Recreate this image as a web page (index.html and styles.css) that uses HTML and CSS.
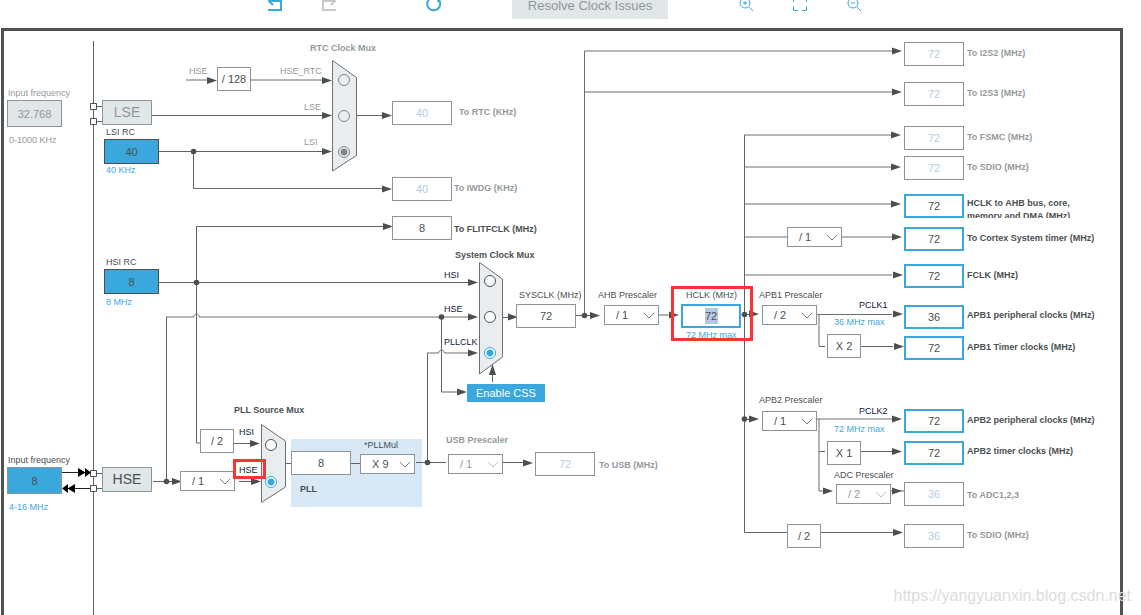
FILE: index.html
```html
<!DOCTYPE html>
<html lang="en">
<head>
<meta charset="utf-8">
<title>Clock Configuration</title>
<link rel="stylesheet" href="styles.css">
</head>
<body>
<div class="page">
<header class="toolbar">
  <div class="group history">
    <button class="tool" aria-label="Undo"><svg width="16" height="16" viewBox="0 0 16 16"><path d="M6 1 2 5l4 4M2 5h12v9H1"/></svg></button>
    <button class="tool off" aria-label="Redo"><svg width="16" height="16" viewBox="0 0 16 16"><path d="M10 1l4 4-4 4M14 5H2v9h13"/></svg></button>
  </div>
  <button class="tool" aria-label="Refresh"><svg width="16" height="16" viewBox="0 0 16 16"><path d="M4 2.500A6.500 6.500 0 1 0 12 3M8 1l5 1-1 4"/></svg></button>
  <button class="resolve" disabled>Resolve Clock Issues</button>
  <div class="group zoomers">
    <button class="tool thin" aria-label="Zoom in"><svg width="16" height="16" viewBox="0 0 16 16"><circle cx="7" cy="7" r="5"/><path d="M11 11l4 4M5 7h4M7 5v4"/></svg></button>
    <button class="tool thin" aria-label="Fit"><svg width="16" height="16" viewBox="0 0 16 16"><path d="M1.500 6V2.500H6M10 2.500h4.500V6M14.500 10.500v4H10M6 14.500H1.500v-4"/></svg></button>
    <button class="tool thin" aria-label="Zoom out"><svg width="16" height="16" viewBox="0 0 16 16"><circle cx="7" cy="7" r="5"/><path d="M11 11l4 4M5 7h4"/></svg></button>
  </div>
</header>
<main class="board">
<div class="pll-panel"></div>
<svg class="layer" width="1141" height="615" viewBox="0 0 1141 615" aria-hidden="true">
  <defs>
    <path id="arrow" d="M0 0-10-3.500V3.500z"/>
    <circle id="dot" r="2.800"/>
    <path id="chev" d="M-5-2.500 0 2.500 5-2.500"/>
  </defs>
  <g class="wire">
    <path d="M93.500 41V615M96 106.500H102M96 121.500H102M96 473.500H102M96 488.500H102"/>
    <path d="M152 115.500H323M159 151.500H323M193.500 151V188.500M356 115.500H383"/>
    <path d="M159 282.500H469M196.500 443V226.500H383M196.500 443H200M166.500 481V317M441.500 317V392H458"/>
    <path d="M427.500 462V353M492.500 382V374M502 317.500H508M576 315.500H590M659 315H670"/>
    <path d="M744.500 135V532.500H787M821 532.500H893M861 346.500H893M861 451.500H893M819 346.500H825M819 451.500H825"/>
    <path d="M234 443.500H251M153 481.500H174M239 481.500H251M285 463.500H291M351 463.500H360M416 462.500H446M503 462.500H523M744 314.500H750M744 419.500H750"/>
  </g>
  <g class="wire soft">
    <path d="M186 80H208M251 80H323M193 188.500H383"/>
    <path d="M166 317H193.500C194.500 313 198.500 313 199.500 317H469M427 353H438.500C439.500 349 443.500 349 444.500 353H469"/>
    <path d="M584.500 315V51H892M584.500 92H892M744 135H892M744 167H892M744 204H892M744 237H787M842 237H892M744 275H892"/>
    <path d="M817 314.500H892M819 315V346M817 419H892M819 419V491H824M891 491H904"/>
  </g>
  <g class="ports"><path d="M90.500 103.500h6v6h-6zM90.500 118.500h6v6h-6zM90.500 470.500h6v6h-6zM90.500 485.500h6v6h-6z"/></g>
  <path class="ext" d="M62 472.500H84M68 488.500H90"/>
  <path class="ext-head" d="M78 468l7.500 4.500L78 477zM85 468l6 4.500-6 4.500zM75 484l-7.500 4.500 7.500 4.500zM68 484l-6 4.500 6 4.500z"/>
  <g class="mux">
    <path d="M332.500 60.500 356.500 77.500V155.500L332.500 171z"/>
    <path d="M479.500 262.500 502.500 279V357L479.500 374z"/>
    <path d="M261.500 424.500 285.500 441V487L261.500 502.500z"/>
  </g>
  <g class="heads">
    <use href="#arrow" x="217" y="80.500"/><use href="#arrow" x="332" y="80.500"/><use href="#arrow" x="332" y="115.500"/><use href="#arrow" x="332" y="151.500"/>
    <use href="#arrow" x="392" y="115.500"/><use href="#arrow" x="392" y="189"/><use href="#arrow" x="393" y="226.500"/>
    <use href="#arrow" x="478" y="282.500"/><use href="#arrow" x="478" y="317"/><use href="#arrow" x="478" y="353"/><use href="#arrow" x="467" y="392"/>
    <path d="M492.500 364 489 375h7z"/>
    <use href="#arrow" x="518" y="317"/><use href="#arrow" x="600" y="315.500"/><use href="#arrow" x="679" y="315"/><use href="#arrow" x="759" y="314"/><use href="#arrow" x="759" y="419"/>
    <use href="#arrow" x="902" y="51"/><use href="#arrow" x="902" y="92"/><use href="#arrow" x="901" y="135"/><use href="#arrow" x="901" y="167"/><use href="#arrow" x="901" y="204"/>
    <use href="#arrow" x="902" y="237"/><use href="#arrow" x="903" y="275"/><use href="#arrow" x="903" y="314"/><use href="#arrow" x="904" y="346.500"/>
    <use href="#arrow" x="902" y="419"/><use href="#arrow" x="902" y="451.500"/><use href="#arrow" x="833" y="491"/><use href="#arrow" x="902" y="491"/><use href="#arrow" x="903" y="532.500"/>
    <use href="#arrow" x="260" y="443.500"/><use href="#arrow" x="261" y="481.500"/><use href="#arrow" x="182" y="481.500"/><use href="#arrow" x="533" y="463"/>
    <use href="#dot" x="193.500" y="151.500"/><use href="#dot" x="196.500" y="282.500"/><use href="#dot" x="166.500" y="481.500"/><use href="#dot" x="441.500" y="317"/>
    <use href="#dot" x="427.500" y="462.500"/><use href="#dot" x="584.500" y="315.500"/><use href="#dot" x="744.500" y="314.500"/><use href="#dot" x="744.500" y="419"/>
  </g>
</svg>

<!-- Sources -->
<label class="t dim" id="l-lsef" for="lsef">Input frequency</label><input class="src grey" id="lsef" value="32.768" disabled>
<span class="t dim" id="lse-range">0-1000 KHz</span>
<span class="osc dim" id="lse">LSE</span>
<label class="t" id="l-lsi" for="lsi">LSI RC</label><input class="src rc" id="lsi" value="40" readonly><span class="t blue" id="lsi-range">40 KHz</span>
<label class="t" id="l-hsi" for="hsi">HSI RC</label><input class="src rc" id="hsi" value="8" readonly><span class="t blue" id="hsi-range">8 MHz</span>
<label class="t" id="l-hsef" for="hsef">Input frequency</label><input class="src" id="hsef" value="8"><span class="t blue" id="hse-range">4-16 MHz</span>
<span class="osc" id="hse">HSE</span>

<!-- RTC clock mux -->
<span class="t b dim" id="rtc-title">RTC Clock Mux</span>
<span class="t dim" id="rtc-in">HSE</span><span class="fixed" id="div128">/ 128</span>
<label class="t dim" id="l-rtc1" for="rtc1">HSE_RTC</label><input type="radio" name="rtc" id="rtc1" disabled>
<label class="t dim" id="l-rtc2" for="rtc2">LSE</label><input type="radio" name="rtc" id="rtc2" disabled>
<label class="t dim" id="l-rtc3" for="rtc3">LSI</label><input type="radio" name="rtc" id="rtc3" disabled checked>
<input class="val" id="rtc" value="40" disabled><label class="t b dim" id="l-rtc" for="rtc">To RTC (KHz)</label>
<input class="val" id="iwdg" value="40" disabled><label class="t b dim" id="l-iwdg" for="iwdg">To IWDG (KHz)</label>
<input class="val" id="flit" value="8" readonly><label class="t b" id="l-flit" for="flit">To FLITFCLK (MHz)</label>

<!-- System clock mux -->
<span class="t b" id="sys-title">System Clock Mux</span>
<label class="t navy" id="l-sys1" for="sys1">HSI</label><input type="radio" name="sys" id="sys1">
<label class="t navy" id="l-sys2" for="sys2">HSE</label><input type="radio" name="sys" id="sys2">
<label class="t navy" id="l-sys3" for="sys3">PLLCLK</label><input type="radio" name="sys" id="sys3" checked>
<button class="css-button">Enable CSS</button>
<label class="t" id="l-sysclk" for="sysclk">SYSCLK (MHz)</label><input class="val" id="sysclk" value="72" readonly>
<label class="t" id="l-ahb" for="ahb">AHB Prescaler</label><select id="ahb"><option>/ 1</option></select>
<label class="t" id="l-hclk" for="hclk">HCLK (MHz)</label><input class="val on" id="hclk" value="72"><span class="t blue" id="hclk-max">72 MHz max</span>

<!-- PLL -->
<span class="t b" id="pll-title">PLL Source Mux</span>
<span class="fixed" id="hsidiv">/ 2</span>
<select id="hsediv" aria-label="HSE divider"><option>/ 1</option></select>
<label class="t navy" id="l-pll1" for="pll1">HSI</label><input type="radio" name="pll" id="pll1">
<label class="t navy" id="l-pll2" for="pll2">HSE</label><input type="radio" name="pll" id="pll2" checked>
<input class="val" id="pll" value="8" readonly><label class="t b" id="l-pll" for="pll">PLL</label>
<label class="t" id="l-mul" for="mul">*PLLMul</label><select id="mul"><option>X 9</option></select>
<label class="t b dim" id="l-usbdiv" for="usbdiv">USB Prescaler</label><select id="usbdiv" disabled><option>/ 1</option></select>
<input class="val" id="usb" value="72" disabled><label class="t b dim" id="l-usb" for="usb">To USB (MHz)</label>

<!-- Bus prescalers -->
<select id="cortexdiv" aria-label="Cortex timer prescaler"><option>/ 1</option></select>
<label class="t" id="l-apb1" for="apb1">APB1 Prescaler</label><select id="apb1"><option>/ 2</option></select>
<span class="t navy" id="pclk1">PCLK1</span><span class="t blue" id="pclk1-max">36 MHz max</span><span class="fixed" id="mul1">X 2</span>
<label class="t" id="l-apb2" for="apb2">APB2 Prescaler</label><select id="apb2"><option>/ 1</option></select>
<span class="t navy" id="pclk2">PCLK2</span><span class="t blue" id="pclk2-max">72 MHz max</span><span class="fixed" id="mul2">X 1</span>
<label class="t" id="l-adcdiv" for="adcdiv">ADC Prescaler</label><select id="adcdiv" disabled><option>/ 2</option></select>
<span class="fixed" id="sdiodiv">/ 2</span>

<!-- Outputs -->
<input class="val out" id="o1" value="72" disabled><label class="t b dim out-l" id="l-o1" for="o1">To I2S2 (MHz)</label>
<input class="val out" id="o2" value="72" disabled><label class="t b dim out-l" id="l-o2" for="o2">To I2S3 (MHz)</label>
<input class="val out" id="o3" value="72" disabled><label class="t b dim out-l" id="l-o3" for="o3">To FSMC (MHz)</label>
<input class="val out" id="o4" value="72" disabled><label class="t b dim out-l" id="l-o4" for="o4">To SDIO (MHz)</label>
<input class="val out on" id="o5" value="72"><label class="t b out-l" id="l-o5" for="o5">HCLK to AHB bus, core,<br>memory and DMA (MHz)</label>
<input class="val out on" id="o6" value="72"><label class="t b out-l" id="l-o6" for="o6">To Cortex System timer (MHz)</label>
<input class="val out on" id="o7" value="72"><label class="t b out-l" id="l-o7" for="o7">FCLK (MHz)</label>
<input class="val out on" id="o8" value="36"><label class="t b out-l" id="l-o8" for="o8">APB1 peripheral clocks (MHz)</label>
<input class="val out on" id="o9" value="72"><label class="t b out-l" id="l-o9" for="o9">APB1 Timer clocks (MHz)</label>
<input class="val out on" id="o10" value="72"><label class="t b out-l" id="l-o10" for="o10">APB2 peripheral clocks (MHz)</label>
<input class="val out on" id="o11" value="72"><label class="t b out-l" id="l-o11" for="o11">APB2 timer clocks (MHz)</label>
<input class="val out" id="o12" value="36" disabled><label class="t b dim out-l" id="l-o12" for="o12">To ADC1,2,3</label>
<input class="val out" id="o13" value="36" disabled><label class="t b dim out-l" id="l-o13" for="o13">To SDIO (MHz)</label>

<svg class="layer" width="1141" height="615" viewBox="0 0 1141 615" aria-hidden="true">
  <g class="chevs">
    <use href="#chev" x="649" y="315.500"/><use href="#chev" x="807" y="315.500"/><use href="#chev" x="807" y="421.500"/><use href="#chev" x="832" y="237.500"/>
    <use href="#chev" x="405" y="464.500"/><use href="#chev" x="225" y="481.500"/>
    <g class="faint"><use href="#chev" x="881" y="494.500"/><use href="#chev" x="493" y="464.500"/></g>
  </g>
</svg>
<div class="mark mark-hclk"></div>
<div class="mark mark-hse"></div>
</main>
<span class="watermark">https://yangyuanxin.blog.csdn.net</span>
</div>
</body>
</html>
```
FILE: styles.css
```css
* { box-sizing: border-box; }
body { margin: 0; background: #fff; color: #4b4f51; font-family: "Liberation Sans", Arial, sans-serif; }
.page { position: relative; min-height: 100vh; display: flex; flex-direction: column; overflow: hidden; }

.toolbar { display: flex; align-items: flex-end; height: 19px; margin-bottom: 9px; padding-left: 267px; overflow: hidden; gap: 70px; flex: none; }
.group { display: flex; gap: 38px; }
.history { margin-right: 19px; }
.zoomers { margin-bottom: 4px; }
.tool { width: 16px; height: 16px; padding: 0; border: 0; background: none; }
.history .tool, .toolbar > .tool { margin-bottom: 7px; }
.zoomers .tool { margin-bottom: 3px; }
.tool svg { display: block; fill: none; stroke: #3aa8dc; stroke-width: 2; }
.tool.off svg { stroke: #c6cacd; }
.tool.thin svg { stroke-width: 1; }
.resolve { flex: none; width: 156px; height: 26px; padding: 0; border: 0; background: #e1e6e9; color: #8f9699; font: 13px/26px "Liberation Sans", Arial, sans-serif; }

.board { flex: 1; min-height: 587px; margin: 0 18px 0 1px; border: 3px solid #4f5354; border-bottom: 0; }
.layer { position: absolute; left: 0; top: 0; pointer-events: none; }
.wire { fill: none; stroke: #5f6365; }
.soft { stroke: #696d6f; }
.heads { fill: #4b4f50; }
.ports { fill: #fff; stroke: #4b4f50; }
.ext { stroke: #222; }
.ext-head { fill: #000; }
.mux { fill: #e9edf0; stroke: #6b7073; }
.chevs { fill: none; stroke: #777c80; }
.faint { stroke: #bcc2c6; }

.t { position: absolute; font-size: 9px; line-height: 12px; white-space: nowrap; }
.b { font-weight: bold; }
.dim { color: #949a9d; }
.blue { color: #3aa8dc; }
.navy { color: #10183c; }

.src, .val, .fixed, .osc, select { position: absolute; margin: 0; padding: 0; border: 1px solid #8b949b; border-radius: 0; background: #fff; color: #4b4f51; font: 11px/22px "Liberation Sans", Arial, sans-serif; text-align: center; }
.val { width: 60px; height: 24px; }
.val:disabled { color: #b3cce6; }
.val.on { border: 2px solid #3aa8dc; }
.src { width: 55px; height: 27px; background: #3aa8dc; }
.src.rc { height: 25px; border-color: #4b4f50; }
.src.grey { background: #e1e6e9; color: #8f9699; }
.osc { width: 50px; height: 25px; background: #e1e6e9; font-size: 14px; }
.osc.dim { color: #8f9699; }
.fixed { width: 34px; height: 24px; }
select { appearance: none; width: 55px; height: 20px; padding-left: 11px; line-height: 18px; text-align: left; opacity: 1; }
select:disabled { color: #949a9d; }
input[type="radio"] { appearance: none; position: absolute; margin: 0; width: 12px; height: 12px; border: 1px solid #4b4f50; border-radius: 50%; background: #fff; }
input[type="radio"]:checked { border-color: #3aa8dc; background: radial-gradient(#3aa8dc 3px, #fff 4px); }
input[type="radio"]:disabled { border-color: #7f878c; background: #e9edf0; }
input[type="radio"]:disabled:checked { background: radial-gradient(#7f878c 3px, #e9edf0 4px); }
.css-button { position: absolute; left: 467px; top: 384px; width: 78px; height: 18px; padding: 0; border: 0; background: #3aa8dc; color: #fff; font: 11px/18px "Liberation Sans", Arial, sans-serif; }
.pll-panel { position: absolute; left: 291px; top: 439px; width: 131px; height: 68px; background: #d9e8f5; }
.mark { position: absolute; border: 3px solid #f93434; pointer-events: none; }
.mark-hclk { left: 671px; top: 286px; width: 82px; height: 55px; }
.mark-hse { left: 233px; top: 459px; width: 33px; height: 20px; }
.watermark { position: absolute; right: 10px; bottom: 9px; font-size: 16px; line-height: 20px; color: #dcdcdc; }

/* Node positions on the canvas: sources */
#l-lsef { left: 8px; top: 87px; }
#lsef { left: 7px; top: 100px; }
#lse-range { left: 9px; top: 134px; }
#lse { left: 102px; top: 100px; }
#l-lsi { left: 106px; top: 126px; }
#lsi { left: 104px; top: 139px; }
#lsi-range { left: 106px; top: 164px; }
#l-hsi { left: 106px; top: 256px; }
#hsi { left: 104px; top: 269px; }
#hsi-range { left: 106px; top: 296px; }
#l-hsef { left: 8px; top: 454px; }
#hsef { left: 7px; top: 467px; }
#hse-range { left: 9px; top: 501px; }
#hse { left: 102px; top: 467px; }

/* RTC */
#rtc-title { left: 310px; top: 42px; }
#rtc-in { left: 189px; top: 65px; }
#div128 { left: 217px; top: 67px; }
#l-rtc1 { left: 280px; top: 65px; }
#l-rtc2 { left: 304px; top: 101px; }
#l-rtc3 { left: 304px; top: 136px; }
#rtc1 { left: 338px; top: 74px; }
#rtc2 { left: 338px; top: 110px; }
#rtc3 { left: 338px; top: 146px; }
#rtc { left: 392px; top: 101px; }
#l-rtc { left: 459px; top: 106px; }
#iwdg { left: 392px; top: 177px; }
#l-iwdg { left: 454px; top: 182px; }
#flit { left: 392px; top: 216px; }
#l-flit { left: 454px; top: 223px; }

/* System clock */
#sys-title { left: 455px; top: 249px; }
#l-sys1 { left: 444px; top: 269px; }
#l-sys2 { left: 444px; top: 303px; }
#l-sys3 { left: 444px; top: 336px; }
#sys1 { left: 484px; top: 275px; }
#sys2 { left: 484px; top: 311px; }
#sys3 { left: 484px; top: 347px; }
#l-sysclk { left: 519px; top: 289px; }
#sysclk { left: 516px; top: 304px; }
#l-ahb { left: 598px; top: 289px; }
#ahb { left: 604px; top: 305px; }
#l-hclk { left: 686px; top: 289px; }
#hclk { left: 681px; top: 304px; background: linear-gradient(#b4cae4, #b4cae4) center / 13px 16px no-repeat #fff; }
#hclk-max { left: 686px; top: 329px; }

/* PLL and USB */
#pll-title { left: 234px; top: 404px; }
#hsidiv { left: 200px; top: 429px; }
#hsediv { left: 180px; top: 471px; }
#l-pll1 { left: 239px; top: 426px; }
#l-pll2 { left: 239px; top: 464px; }
#pll1 { left: 265px; top: 439px; }
#pll2 { left: 265px; top: 476px; }
#pll { left: 291px; top: 451px; }
#l-pll { left: 300px; top: 483px; }
#l-mul { left: 364px; top: 439px; }
#mul { left: 360px; top: 454px; }
#l-usbdiv { left: 446px; top: 434px; }
#usbdiv { left: 448px; top: 454px; }
#usb { left: 535px; top: 452px; }
#l-usb { left: 599px; top: 459px; }

/* Bus prescalers */
#cortexdiv { left: 787px; top: 227px; }
#l-apb1 { left: 759px; top: 289px; }
#apb1 { left: 762px; top: 305px; }
#pclk1 { left: 859px; top: 299px; }
#pclk1-max { left: 834px; top: 316px; }
#mul1 { left: 827px; top: 334px; }
#l-apb2 { left: 759px; top: 394px; }
#apb2 { left: 762px; top: 411px; }
#pclk2 { left: 859px; top: 405px; }
#pclk2-max { left: 834px; top: 423px; }
#mul2 { left: 827px; top: 441px; }
#l-adcdiv { left: 834px; top: 469px; }
#adcdiv { left: 836px; top: 484px; }
#sdiodiv { left: 787px; top: 524px; }

/* Outputs */
.out { left: 904px; }
.out-l { left: 967px; }
#o1 { top: 42px; }
#l-o1 { top: 47px; }
#o2 { top: 82px; }
#l-o2 { top: 87px; }
#o3 { top: 126px; }
#l-o3 { top: 131px; }
#o4 { top: 156px; }
#l-o4 { top: 161px; }
#o5 { top: 194px; }
#l-o5 { top: 197px; height: 21px; line-height: 13px; overflow: hidden; }
#o6 { top: 227px; }
#l-o6 { top: 232px; }
#o7 { top: 264px; }
#l-o7 { top: 269px; }
#o8 { top: 305px; }
#l-o8 { top: 309px; }
#o9 { top: 336px; }
#l-o9 { top: 341px; }
#o10 { top: 409px; }
#l-o10 { top: 414px; }
#o11 { top: 441px; }
#l-o11 { top: 445px; }
#o12 { top: 482px; }
#l-o12 { top: 489px; }
#o13 { top: 524px; }
#l-o13 { top: 529px; }
```
